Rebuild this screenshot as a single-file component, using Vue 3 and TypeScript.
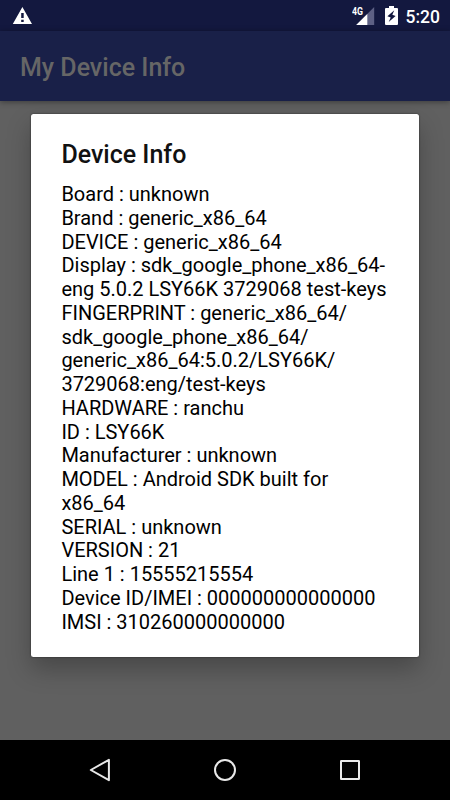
<script setup lang="ts">
const infoLines: string[] = [
  'Board : unknown',
  'Brand : generic_x86_64',
  'DEVICE : generic_x86_64',
  'Display : sdk_google_phone_x86_64-',
  'eng 5.0.2 LSY66K 3729068 test-keys',
  'FINGERPRINT : generic_x86_64/',
  'sdk_google_phone_x86_64/',
  'generic_x86_64:5.0.2/LSY66K/',
  '3729068:eng/test-keys',
  'HARDWARE : ranchu',
  'ID : LSY66K',
  'Manufacturer : unknown',
  'MODEL : Android SDK built for',
  'x86_64',
  'SERIAL : unknown',
  'VERSION : 21',
  'Line 1 : 15555215554',
  'Device ID/IMEI : 000000000000000',
  'IMSI : 310260000000000',
]
</script>

<template>
  <div class="screen">
    <header class="status-bar">
      <svg class="warning" width="20" height="18" viewBox="0 0 20 18">
        <path fill="#fff" fill-rule="evenodd" d="M10.4 0.1 20 17H0.8ZM9.2 5.9v5.2h2.5V5.9ZM9.2 12.8v2.3h2.5v-2.3Z" />
      </svg>
      <div class="status-right">
        <div class="signal">
          <span class="network">4G</span>
          <svg width="19" height="18" viewBox="0 0 19 18">
            <path fill="#5d6084" d="M18.2 0V18H0.2Z" />
            <path fill="#fff" d="M11.3 6.9V18H0.2Z" />
          </svg>
        </div>
        <svg class="battery" width="13" height="19" viewBox="0 0 13 19">
          <path fill="#fff" fill-rule="evenodd" d="M4 0h5v2h3q1 0 1 1v15q0 1-1 1H1q-1 0-1-1V3q0-1 1-1h3ZM9.3 4.3 2.4 10.2 5.7 11.4 3.7 15.9 10.6 9.9 7.3 8.7Z" />
        </svg>
        <span class="clock">5:20</span>
      </div>
    </header>
    <div class="app-bar">My Device Info</div>
    <main class="content">
      <section class="dialog" role="dialog" aria-label="Device Info">
        <h1 class="title">Device Info</h1>
        <div v-for="line in infoLines" :key="line" class="line">{{ line }}</div>
      </section>
    </main>
    <nav class="nav-bar">
      <svg width="24" height="26" viewBox="0 0 24 26">
        <path d="M20.9 2.8v20.4L2.8 13Z" />
      </svg>
      <svg width="24" height="26" viewBox="0 0 24 26">
        <circle cx="12" cy="13" r="10" />
      </svg>
      <svg width="24" height="26" viewBox="0 0 24 26">
        <rect x="3" y="4" width="18" height="18" rx="0.3" />
      </svg>
    </nav>
  </div>
</template>

<style>
body {
  margin: 0;
  background: #000;
}
</style>

<style scoped>
.screen {
  width: 450px;
  height: 800px;
  display: flex;
  flex-direction: column;
  overflow: hidden;
  background: #606060;
  font-family: Roboto, "Liberation Sans", sans-serif;
}
.status-bar {
  height: 31px;
  flex: none;
  box-sizing: border-box;
  display: flex;
  justify-content: space-between;
  padding: 7px 10px 0 12px;
  background: #13183f;
}
.status-right {
  display: flex;
  align-items: flex-start;
}
.signal {
  position: relative;
  width: 19px;
  height: 18px;
  margin-right: 10px;
}
.signal svg,
.battery,
.warning {
  display: block;
}
.network {
  position: absolute;
  left: -4px;
  top: -1px;
  font-size: 11.5px;
  line-height: 11px;
  font-weight: 700;
  color: #fff;
  transform: scaleX(0.76);
  transform-origin: left;
}
.battery {
  margin: -1px 8px 0 0;
}
.clock {
  color: #fff;
  font-size: 17.5px;
  line-height: 20px;
  font-weight: 500;
}
.app-bar {
  height: 70px;
  flex: none;
  box-sizing: border-box;
  padding-left: 20px;
  background: #192048;
  box-shadow: 0 1px 6px rgba(0, 0, 0, 0.4);
  color: #666;
  font-size: 25px;
  line-height: 73px;
  font-weight: 500;
}
.content {
  flex: 1;
  padding: 12.5px 31.5px 0 31px;
}
.dialog {
  box-sizing: border-box;
  height: 543.5px;
  padding: 26.5px 0 0 30.4px;
  border-radius: 2.5px;
  background: #fff;
  box-shadow: 0 0 2px rgba(0, 0, 0, 0.6), 0 12px 24px rgba(0, 0, 0, 0.26);
  color: #000;
}
.title {
  margin: 0 0 13.2px;
  font-size: 25px;
  line-height: 30px;
  font-weight: 500;
  color: #111;
}
.line {
  font-size: 20px;
  line-height: 23.75px;
  white-space: nowrap;
}
.nav-bar {
  height: 60px;
  flex: none;
  box-sizing: border-box;
  display: flex;
  align-items: center;
  justify-content: space-between;
  padding: 0 88px;
  background: #000;
}
.nav-bar svg {
  fill: none;
  stroke: #e8e8e8;
  stroke-width: 2;
  stroke-linejoin: round;
}
</style>
